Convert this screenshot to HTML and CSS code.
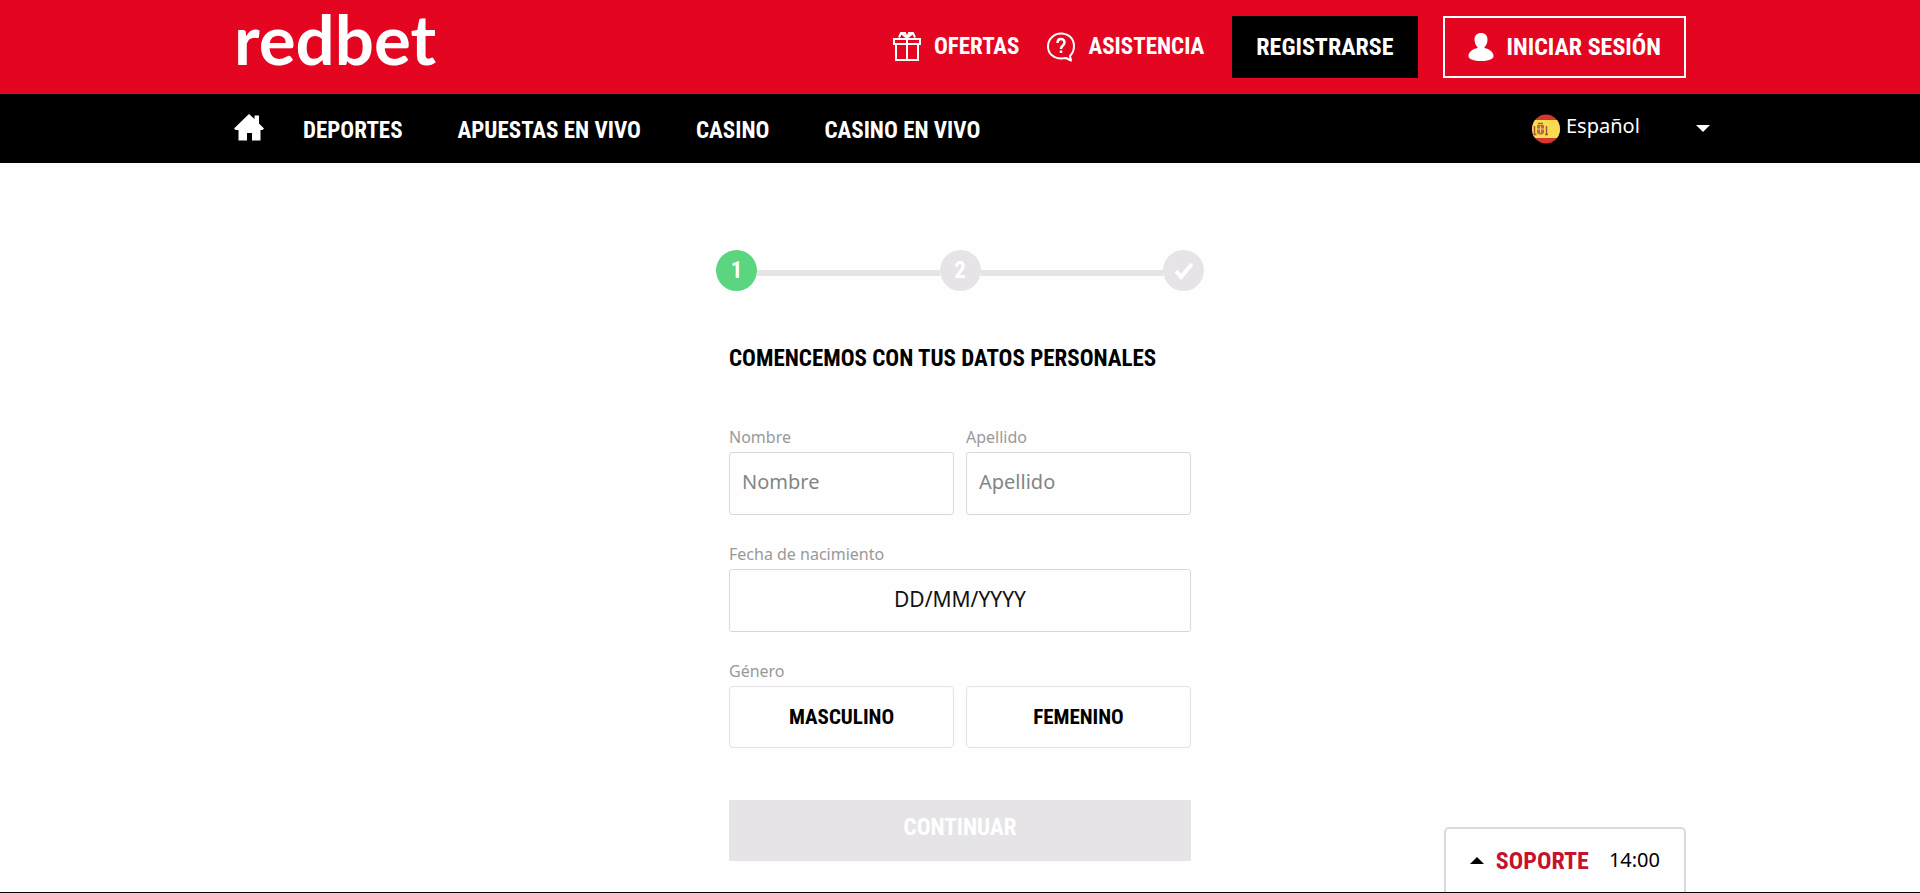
FILE: index.html
```
<!DOCTYPE html>
<html lang="es">
<head>
  <meta charset="UTF-8" />
  <meta name="viewport" content="width=device-width, initial-scale=1" />
  <title>redbet - Registrarse</title>
  <link rel="stylesheet" href="styles.css">
</head>
<body>
  <header class="topbar">
    <div class="container topbar-inner">
      <a class="logo" href="#">redbet</a>
      <div class="actions">
        <a class="action-link" href="#">
          <svg class="icon" viewBox="0 0 28 30" fill="none" stroke="currentColor" stroke-width="2">
            <path d="M1 7h26v5H1zM3 12v16h22V12M14 7v21M14 6L8 1L6 5.500M14 6L20 1L22 5.500M8 1h4l2 5l2-5h4" />
          </svg>
          Ofertas
        </a>
        <a class="action-link" href="#">
          <svg class="icon" viewBox="0 0 28 30" fill="none" stroke="currentColor" stroke-width="2">
            <path d="M23 24C26 21 27 18 27 14C27 6 21 1.500 14 1.500S1 7 1 14.500S7 26.500 14 26.500C16 26.500 17 26 19 26L24 28.500Z" stroke-linejoin="round" />
            <path d="M10.500 11C10.500 8.500 12 7 14 7s3.500 1.500 3.500 3.500c0 3-3.500 3-3.500 6.500M14 18.500v2.500" stroke-width="2.500" />
          </svg>
          Asistencia
        </a>
        <button class="btn btn-dark" type="button">Registrarse</button>
        <button class="btn btn-outline" type="button">
          <svg class="icon-user" viewBox="0 0 26 30" fill="currentColor">
            <path d="M13 1c4 0 6.500 2.500 6.500 6.500c0 3-1 5.500-3 7.500v1c5 1 9 4 9 8c0 3.500-5.500 5-12.500 5S.500 27.500.500 24c0-4 4-7 9-8v-1c-2-2-3-4.500-3-7.500C6.500 3.500 9 1 13 1z" />
          </svg>
          Iniciar sesión
        </button>
      </div>
    </div>
  </header>

  <nav class="navbar">
    <div class="container navbar-inner">
      <div class="menu">
        <a class="home" href="#" aria-label="Inicio">
          <svg viewBox="0 0 30 27" fill="currentColor">
            <path d="M15 0l5.500 5V1.500H25V9.500L30 14.500L28.500 16H26.500V26.500H18V19H13V26.500H4.500V16H1.500L0 14.500z" />
          </svg>
        </a>
        <a href="#">Deportes</a>
        <a href="#">Apuestas en vivo</a>
        <a href="#">Casino</a>
        <a href="#">Casino en vivo</a>
      </div>
      <div class="language">
        <svg class="flag" viewBox="0 0 28 30">
          <defs><clipPath id="round"><ellipse cx="14" cy="15" rx="14" ry="14.500" /></clipPath></defs>
          <g clip-path="url(#round)">
            <rect width="28" height="30" fill="#d6372c" />
            <rect y="6" width="28" height="18" fill="#f8dc4f" />
            <path d="M5 11h7v8q-3.500 3-7 0z" fill="#c4643a" />
            <path d="M8.500 12v7M5 15h7" stroke="#f0c890" />
            <path d="M6 9.500h5M2.500 12v9M14.500 12v9M1.500 20.500h3M13 20.500h3" stroke="#9c5a38" stroke-width="1.500" />
          </g>
        </svg>
        <select aria-label="Idioma">
          <option>Español</option>
        </select>
        <svg class="caret" viewBox="0 0 14 7"><path d="M0 0h14l-7 7z" fill="currentColor" /></svg>
      </div>
    </div>
  </nav>

  <main class="register">
    <ol class="steps">
      <li class="step active">1</li>
      <li class="line"></li>
      <li class="step">2</li>
      <li class="line"></li>
      <li class="step">
        <svg viewBox="0 0 20 18" fill="none" stroke="currentColor" stroke-width="4"><path d="M2 9l5 6L18 2" /></svg>
      </li>
    </ol>

    <form class="form">
      <h1>Comencemos con tus datos personales</h1>

      <div class="row">
        <div class="field">
          <label for="nombre">Nombre</label>
          <input type="text" id="nombre" placeholder="Nombre" />
        </div>
        <div class="field">
          <label for="apellido">Apellido</label>
          <input type="text" id="apellido" placeholder="Apellido" />
        </div>
      </div>

      <div class="field">
        <label for="fecha">Fecha de nacimiento</label>
        <input class="date" type="text" id="fecha" placeholder="DD/MM/YYYY" />
      </div>

      <div class="field" role="group" aria-labelledby="genero">
        <span class="label" id="genero">Género</span>
        <div class="row">
          <button class="option" type="button">Masculino</button>
          <button class="option" type="button">Femenino</button>
        </div>
      </div>

      <button class="submit" type="submit" disabled>Continuar</button>
    </form>
  </main>

  <div class="bottom">
    <div class="container bottom-inner">
      <button class="support" type="button">
        <svg class="caret" viewBox="0 0 14 7"><path d="M0 7h14l-7-7z" fill="#000" /></svg>
        <strong>Soporte</strong>
        <span class="time">14:00</span>
      </button>
    </div>
  </div>
</body>
</html>
```

FILE: styles.css
```
* {
  box-sizing: border-box;
}

body {
  margin: 0;
  min-height: 100vh;
  background: #fefefe;
  color: #000;
  font-family: "Noto Sans", sans-serif;
  font-size: 20px;
}

a {
  color: inherit;
  text-decoration: none;
}

button, input, select {
  font: inherit;
  color: inherit;
}

button {
  cursor: pointer;
}

.container {
  width: 100%;
  max-width: 1500px;
  margin: 0 auto;
  padding: 0 24px;
}

/* red header */
.topbar {
  background: #e40521;
  color: #fff;
}

.topbar-inner {
  display: flex;
  justify-content: space-between;
  align-items: center;
  height: 94px;
  padding-bottom: 1px;
}

.logo {
  font-family: Lato, sans-serif;
  font-size: 69px;
  font-weight: 700;
  line-height: 76px;
  padding-bottom: 16px;
}

.actions, .action-link, .btn, .menu {
  display: flex;
  align-items: center;
}

.action-link, .btn, .menu, .option, .submit, .support strong, h1, .step {
  font-family: "Roboto Condensed", "Liberation Sans Narrow", "Liberation Sans", sans-serif;
  font-size: 23px;
  font-weight: 700;
  line-height: 28px;
  text-transform: uppercase;
}

.btn, .support strong {
  font-size: 24px;
}

.action-link {
  gap: 13px;
  margin-right: 28px;
}

.icon {
  width: 28px;
  height: 30px;
}

.btn {
  justify-content: center;
  height: 62px;
  padding: 0 24px;
  border: 0;
}

.btn-dark {
  background: #000;
  margin-right: 25px;
}

.btn-outline {
  gap: 13px;
  padding: 0 23px;
  background: none;
  border: 2px solid #fff;
}

.icon-user {
  width: 26px;
  height: 30px;
}

/* black menu */
.navbar {
  background: #000;
  color: #fff;
}

.navbar-inner {
  display: flex;
  justify-content: space-between;
  align-items: center;
  height: 69px;
  padding-right: 0;
}

.menu {
  gap: 55px;
  padding-top: 5px;
}

.home {
  width: 30px;
  height: 34px;
  margin-right: -16px;
}

.language {
  display: flex;
  align-items: center;
  width: 178px;
}

.flag {
  width: 28px;
  height: 30px;
  flex: none;
}

.language select {
  flex: 1;
  appearance: none;
  background: none;
  border: 0;
  padding: 0 0 6px 6px;
}

.caret {
  width: 14px;
  height: 7px;
}

/* registration form */
.register {
  max-width: 488px;
  margin: 0 auto;
  padding-top: 87px;
}

.steps {
  display: flex;
  align-items: center;
  list-style: none;
  margin: 0;
  padding: 0;
}

.step {
  display: flex;
  align-items: center;
  justify-content: center;
  width: 41px;
  height: 41px;
  border-radius: 50%;
  background: #e6e4e7;
  color: #fff;
}

.step.active {
  background: #5bd580;
}

.step svg {
  width: 20px;
  height: 18px;
}

.line {
  flex: 1;
  height: 6px;
  margin-top: 4px;
  background: #e6e4e7;
}

.form {
  padding: 0 13px;
}

h1 {
  margin: 54px 0 52px;
}

.row {
  display: grid;
  grid-template-columns: 1fr 1fr;
  gap: 12px;
}

.field {
  margin-bottom: 27px;
}

.row .field {
  min-width: 0;
}

label, .label {
  display: block;
  color: #999;
  font-size: 16px;
  line-height: 24px;
  height: 27px;
}

.field input {
  display: block;
  width: 100%;
  height: 63px;
  padding: 0 12px 4px;
  background: none;
  border: 1px solid #d9d7da;
  border-radius: 3px;
}

.field input::placeholder {
  color: #858585;
  opacity: 1;
}

.field .date {
  font-size: 21px;
  text-align: center;
}

.field .date::placeholder {
  color: #111;
}

.option {
  height: 62px;
  background: none;
  border: 1px solid #e3e1e4;
  border-radius: 4px;
  font-size: 21px;
}

.submit {
  display: block;
  width: 100%;
  height: 61px;
  margin-top: 52px;
  padding: 0 0 6px;
  border: 0;
  background: #e6e4e7;
  color: #fff;
}

/* support tab at the bottom of the window */
.bottom {
  position: fixed;
  left: 0;
  right: 0;
  bottom: 0;
  border-bottom: 1px solid #000;
}

.bottom-inner {
  display: flex;
  justify-content: flex-end;
}

.support {
  display: flex;
  align-items: center;
  height: 65px;
  padding: 0 24px;
  background: #fefefe;
  border: 2px solid #dcd9de;
  border-bottom: 0;
  border-radius: 5px 5px 0 0;
}

.support strong {
  margin: 0 20px 0 12px;
  color: #c4122f;
}

.time {
  padding-bottom: 3px;
}
```
